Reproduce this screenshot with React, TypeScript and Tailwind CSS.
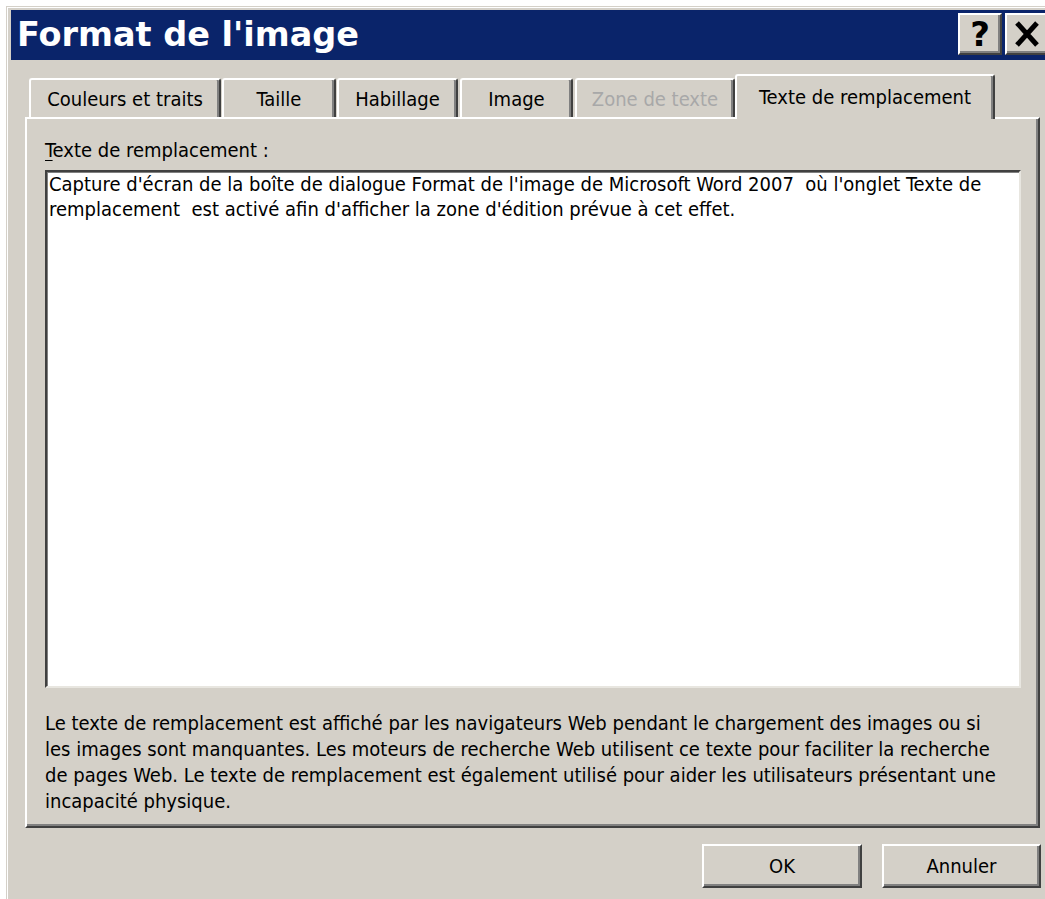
import React from 'react';

const face = "font-['DejaVu_Sans_Condensed','DejaVu_Sans',sans-serif]";

type Tab = { label: string; box: string; active?: boolean; disabled?: boolean };

const tabs: Tab[] = [
  { label: 'Couleurs et traits', box: 'ml-[4px] w-[192px]' },
  { label: 'Taille', box: 'ml-[1px] w-[114px]' },
  { label: 'Habillage', box: 'ml-[1px] w-[121px]' },
  { label: 'Image', box: 'ml-[2px] w-[113px]' },
  { label: 'Zone de texte', box: 'ml-[2px] w-[160px]', disabled: true },
  { label: 'Texte de remplacement', box: 'w-[260px]', active: true },
];

const altLines = [
  "Capture d'écran de la boîte de dialogue Format de l'image de Microsoft Word 2007  où l'onglet Texte de",
  "remplacement  est activé afin d'afficher la zone d'édition prévue à cet effet.",
];

const helpLines = [
  'Le texte de remplacement est affiché par les navigateurs Web pendant le chargement des images ou si',
  'les images sont manquantes. Les moteurs de recherche Web utilisent ce texte pour faciliter la recherche',
  'de pages Web. Le texte de remplacement est également utilisé pour aider les utilisateurs présentant une',
  'incapacité physique.',
];

function TabButton({ tab }: { tab: Tab }) {
  if (tab.active) {
    return (
      <div
        className={`${tab.box} relative z-10 h-[45px] rounded-t-[3px] border-l-2 border-t-2 border-r-2 border-l-white border-t-white border-r-[#404040] bg-[#d4d0c8] shadow-[inset_-2px_0_0_#808080] flex justify-center pt-[9px] text-[20px] leading-[24px] text-black`}
      >
        {tab.label}
      </div>
    );
  }
  return (
    <div
      className={`${tab.box} mb-[2px] h-[39px] rounded-t-[3px] border-l-2 border-t-2 border-r-2 border-l-white border-t-white border-r-[#404040] bg-[#d4d0c8] shadow-[inset_-2px_0_0_#808080] flex justify-center pt-[7px] text-[20px] leading-[24px] ${
        tab.disabled ? 'text-[#a8a8a8]' : 'text-black'
      }`}
    >
      {tab.label}
    </div>
  );
}

function PushButton({ children, width }: { children: React.ReactNode; width: string }) {
  return (
    <button
      className={`${width} h-[44px] border-2 border-t-white border-l-white border-r-[#404040] border-b-[#404040] bg-[#d4d0c8] shadow-[inset_-2px_-2px_0_#808080] text-[20px] leading-none text-black`}
    >
      {children}
    </button>
  );
}

export default function App() {
  return (
    <div className={`w-[1045px] h-[899px] overflow-hidden bg-white ${face}`}>
      <div className="mt-[6px] ml-[6px] w-[1045px] h-[900px] border-l border-t border-[#d4d0c8] shadow-[inset_1px_1px_0_#ffffff] bg-[#d4d0c8] pt-[3px] pl-[4px]">
        {/* caption bar */}
        <div className="w-[1040px] h-[50px] bg-[#0a246a] flex items-start justify-between pl-[6px] pr-[2px]">
          <span className="mt-[8px] font-['DejaVu_Sans',sans-serif] font-bold text-[33.5px] leading-[34px] text-white">
            Format de l'image
          </span>
          <div className="flex gap-[3px] pt-[3px]">
            <div className="w-[44px] h-[42px] border-2 border-t-white border-l-white border-r-[#404040] border-b-[#404040] bg-[#d4d0c8] shadow-[inset_-2px_-2px_0_#808080] flex items-center justify-center font-['DejaVu_Sans',sans-serif] font-bold text-[34px] leading-none text-black">
              ?
            </div>
            <div className="w-[44px] h-[42px] border-2 border-t-white border-l-white border-r-[#404040] border-b-[#404040] bg-[#d4d0c8] shadow-[inset_-2px_-2px_0_#808080] flex items-center justify-center">
              <svg width="26" height="26" viewBox="0 0 26 26">
                <path d="M3 2 L23 24 M23 2 L3 24" stroke="#000" strokeWidth="5" />
              </svg>
            </div>
          </div>
        </div>

        <div className="pl-[14px] pt-[14px]">
          {/* tab strip */}
          <div className="flex items-end h-[45px] -mb-[2px]">
            {tabs.map((t) => (
              <TabButton key={t.label} tab={t} />
            ))}
          </div>

          {/* tab page */}
          <div className="w-[1015px] h-[711px] border-2 border-t-white border-l-white border-r-[#404040] border-b-[#404040] shadow-[inset_-2px_-2px_0_#808080] pl-[18px] pt-[18px] text-[20px] text-black">
            <div className="leading-[26px]">
              <span className="underline decoration-1 underline-offset-[3px]">T</span>exte de remplacement :
            </div>
            <div className="mt-[7px] w-[976px] h-[518px] bg-white border-2 border-t-[#404040] border-l-[#404040] border-r-[#e8e6e0] border-b-[#e8e6e0] shadow-[inset_1px_1px_0_#808080] pl-[2px] whitespace-pre leading-[25px]">
              {altLines.map((l) => (
                <div key={l}>{l}</div>
              ))}
            </div>
            <div className="mt-[22px] leading-[26px] whitespace-pre">
              {helpLines.map((l) => (
                <div key={l}>{l}</div>
              ))}
            </div>
          </div>

          {/* dialog buttons */}
          <div className="w-[1016px] flex justify-end gap-[20px] mt-[16px]">
            <PushButton width="w-[160px]">OK</PushButton>
            <PushButton width="w-[159px]">Annuler</PushButton>
          </div>
        </div>
      </div>
    </div>
  );
}
